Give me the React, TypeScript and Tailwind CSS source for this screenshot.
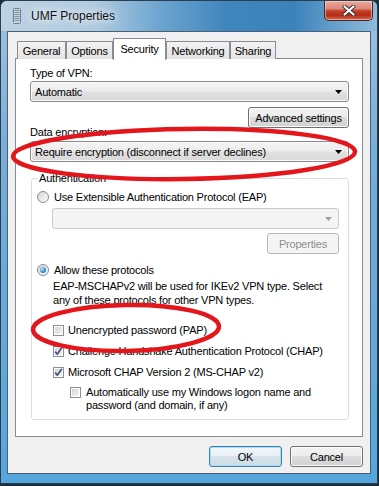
import React from "react";

function Arrow({ disabled }: { disabled?: boolean }) {
  return (
    <svg width="7" height="4" viewBox="0 0 7 4" className="shrink-0">
      <polygon points="0,0 7,0 3.5,4" fill={disabled ? "#a0a0a0" : "#000"} />
    </svg>
  );
}

function Combo({ text, disabled }: { text?: string; disabled?: boolean }) {
  if (disabled) {
    return (
      <div className="flex h-[21px] items-center justify-between rounded-[3px] border border-[#c5cacd] bg-[#f4f4f4] pr-[6px] pl-[4px]">
        <span />
        <Arrow disabled />
      </div>
    );
  }
  return (
    <div className="flex h-[21px] items-center justify-between rounded-[3px] border border-[#8a8a8a] bg-[linear-gradient(#f4f4f4_0%,#ededed_45%,#e1e1e1_55%,#d9d9d9_100%)] pr-[6px] pl-[4px] shadow-[inset_0_0_0_1px_#fafafa]">
      <span className="whitespace-nowrap">{text}</span>
      <Arrow />
    </div>
  );
}

function Radio({ checked }: { checked?: boolean }) {
  return (
    <div className="flex h-[12px] w-[12px] shrink-0 items-center justify-center rounded-full border border-[#8b8b8b] bg-[linear-gradient(135deg,#d6d6d6,#fbfbfb)]">
      {checked && (
        <div className="h-[6px] w-[6px] rounded-full bg-[radial-gradient(circle_at_35%_35%,#b6e6ff_0%,#3a8fd6_55%,#0d4a8c_100%)]" />
      )}
    </div>
  );
}

function Check({ checked }: { checked?: boolean }) {
  return (
    <div className="relative h-[11px] w-[11px] shrink-0 border border-[#8e8f8f] bg-white p-[1px]">
      <div className="h-full w-full bg-[linear-gradient(135deg,#d3d3d3,#f6f6f6)]" />
      {checked && (
        <svg
          width="11"
          height="11"
          viewBox="0 0 11 11"
          className="absolute -top-[1px] -left-[1px]"
        >
          <path
            d="M2.2 5.6 L4.3 8.2 L8.8 1.8"
            fill="none"
            stroke="#3f5186"
            strokeWidth="1.7"
          />
        </svg>
      )}
    </div>
  );
}

function Button({
  children,
  disabled,
  primary,
  className,
}: {
  children: React.ReactNode;
  disabled?: boolean;
  primary?: boolean;
  className?: string;
}) {
  let look =
    "border-[#707070] bg-[linear-gradient(#f3f3f3_0%,#ececec_45%,#dddddd_50%,#d1d1d1_100%)] shadow-[inset_0_0_0_1px_#fbfbfb]";
  if (disabled) look = "border-[#b5b9bc] bg-[#f4f4f4] text-[#8d8d8d]";
  if (primary)
    look =
      "border-[#3c7fb1] bg-[linear-gradient(#f1f7fa_0%,#e9f1f5_45%,#d9e4ea_50%,#ccdbe3_100%)] shadow-[inset_0_0_0_1px_#a6def7]";
  return (
    <div
      className={`flex h-[21px] items-center justify-center rounded-[3px] border whitespace-nowrap ${look} ${className ?? ""}`}
    >
      {children}
    </div>
  );
}

const tabs = [
  { label: "General", w: "w-[49px]" },
  { label: "Options", w: "w-[47px]" },
  { label: "Security", w: "w-[53px]", active: true },
  { label: "Networking", w: "w-[64px]" },
  { label: "Sharing", w: "w-[46px]" },
];

function TitleIcon() {
  return (
    <svg width="8" height="16" viewBox="0 0 8 16" className="shrink-0">
      <rect x="0.5" y="0.5" width="7" height="15" rx="1" fill="#c9d3dc" stroke="#6d7f8e" />
      {[2, 4, 6, 8, 10, 12].map((y) => (
        <rect key={y} x="1.5" y={y} width="5" height="1" fill="#7f93a5" />
      ))}
    </svg>
  );
}

function CloseButton() {
  return (
    <div className="mr-[4px] flex h-[20px] w-[49px] items-center justify-center self-start rounded-b-[5px] border border-t-0 border-[#4a2622] bg-[linear-gradient(#e9aa9c_0%,#d9887a_40%,#c4412b_52%,#b42c18_75%,#d66a50_100%)] shadow-[inset_0_0_0_1px_rgba(255,220,210,0.55)]">
      <svg width="14" height="11" viewBox="0 0 14 11">
        <path d="M2.5 1.5 L11.5 9.5 M11.5 1.5 L2.5 9.5" stroke="#3a2a2a" strokeWidth="4" strokeLinecap="round" />
        <path d="M2.5 1.5 L11.5 9.5 M11.5 1.5 L2.5 9.5" stroke="#ffffff" strokeWidth="2.2" strokeLinecap="round" />
      </svg>
    </div>
  );
}

export default function App() {
  return (
    <div className="relative h-[486px] w-[379px] overflow-hidden bg-[#1c2e3e] font-['Liberation_Sans',Arial,sans-serif] text-[11px] leading-[14px] tracking-[-0.2px] text-black">
      <div className="flex h-[484px] w-[378px] flex-col rounded-t-[7px] border border-[#2b3e50] bg-[linear-gradient(to_bottom,#a5c3dc_0%,#78aed8_30%,#6aa9d7_60%,#55a6dd_100%)]">
        {/* title bar */}
        <div className="flex h-[30px] items-center rounded-t-[6px] bg-[linear-gradient(to_right,#bdd2e3_0%,#b0cbe0_25%,#6ea5d0_42%,#3f86be_60%,#3c82ba_78%,#6aa3cf_90%,#8fbbdb_100%)] pl-[12px]">
          <TitleIcon />
          <span className="ml-[10px] pb-[1px] text-[12px] tracking-normal whitespace-nowrap text-[#111] [text-shadow:0_0_8px_#ffffff,0_0_12px_#ffffff]">
            UMF Properties
          </span>
          <div className="flex-1" />
          <CloseButton />
        </div>

        {/* client area */}
        <div className="ml-[6px] h-[443px] w-[364px] border border-[#4a6074] bg-[#f0f0f0] pt-[6px] pl-[7px]">
          {/* tabs */}
          <div className="ml-[2px] flex h-[21px] items-end">
            {tabs.map((t) =>
              t.active ? (
                <div
                  key={t.label}
                  className={`relative z-10 flex h-[22px] ${t.w} -mb-[1px] justify-center border border-b-0 border-[#898c95] bg-white pt-[3px]`}
                >
                  {t.label}
                </div>
              ) : (
                <div
                  key={t.label}
                  className={`flex h-[18px] ${t.w} justify-center border border-b-0 border-[#898c95] bg-[linear-gradient(#f3f3f3,#e3e3e3)] pt-[2px]`}
                >
                  {t.label}
                </div>
              ),
            )}
          </div>

          {/* panel */}
          <div className="-mt-[1px] flex h-[379px] w-[348px] flex-col border border-[#898c95] bg-white pt-[7px] pr-[13px] pl-[14px]">
            <div className="h-[14px]">Type of VPN:</div>
            <div className="mt-[1px]">
              <Combo text="Automatic" />
            </div>
            <Button className="mt-[5px] w-[101px] self-end">Advanced settings</Button>
            <div className="-mt-[3px] h-[14px]">Data encryption:</div>
            <div className="mt-[2px]">
              <Combo text="Require encryption (disconnect if server declines)" />
            </div>

            {/* authentication group */}
            <div className="relative mt-[16px] ml-[1px] flex h-[242px] w-[318px] flex-col rounded-[3px] border border-[#d5dfe5] pt-[11px] pr-[9px] pl-[5px]">
              <span className="absolute -top-[8px] left-[6px] bg-white px-[1px] whitespace-nowrap">
                Authentication
              </span>
              <div className="flex h-[14px] items-center gap-[5px]">
                <Radio />
                <span className="whitespace-nowrap">Use Extensible Authentication Protocol (EAP)</span>
              </div>
              <div className="mt-[4px] ml-[15px]">
                <Combo disabled />
              </div>
              <Button disabled className="mt-[4px] w-[72px] self-end">
                Properties
              </Button>
              <div className="mt-[9px] flex h-[14px] items-center gap-[5px]">
                <Radio checked />
                <span className="whitespace-nowrap">Allow these protocols</span>
              </div>
              <div className="mt-[2px] ml-[16px] whitespace-nowrap">
                EAP-MSCHAPv2 will be used for IKEv2 VPN type. Select
                <br />
                any of these protocols for other VPN types.
              </div>
              <div className="mt-[16px] ml-[16px] flex h-[14px] items-center gap-[4px]">
                <Check />
                <span className="whitespace-nowrap">Unencrypted password (PAP)</span>
              </div>
              <div className="mt-[7px] ml-[16px] flex h-[14px] items-center gap-[4px]">
                <Check checked />
                <span className="whitespace-nowrap">Challenge Handshake Authentication Protocol (CHAP)</span>
              </div>
              <div className="mt-[7px] ml-[16px] flex h-[14px] items-center gap-[4px]">
                <Check checked />
                <span className="whitespace-nowrap">Microsoft CHAP Version 2 (MS-CHAP v2)</span>
              </div>
              <div className="mt-[7px] ml-[33px] flex items-start gap-[5px] leading-[13px]">
                <div className="mt-[1px]">
                  <Check />
                </div>
                <span className="whitespace-nowrap">
                  Automatically use my Windows logon name and
                  <br />
                  password (and domain, if any)
                </span>
              </div>
            </div>
          </div>

          {/* dialog buttons */}
          <div className="mt-[9px] flex w-[348px] justify-end gap-[8px]">
            <Button primary className="w-[73px]">
              OK
            </Button>
            <Button className="w-[73px]">Cancel</Button>
          </div>
        </div>
      </div>

      {/* red annotation marks drawn over the dialog */}
      <svg
        width="379"
        height="486"
        viewBox="0 0 379 486"
        className="pointer-events-none absolute top-0 left-0"
      >
        <ellipse
          cx="184"
          cy="154"
          rx="171"
          ry="25"
          transform="rotate(-0.8 184 154)"
          fill="none"
          stroke="#e3161c"
          strokeWidth="4.5"
        />
        <ellipse
          cx="126"
          cy="328"
          rx="93"
          ry="23"
          transform="rotate(-1 126 328)"
          fill="none"
          stroke="#e3161c"
          strokeWidth="4.5"
        />
      </svg>
    </div>
  );
}
